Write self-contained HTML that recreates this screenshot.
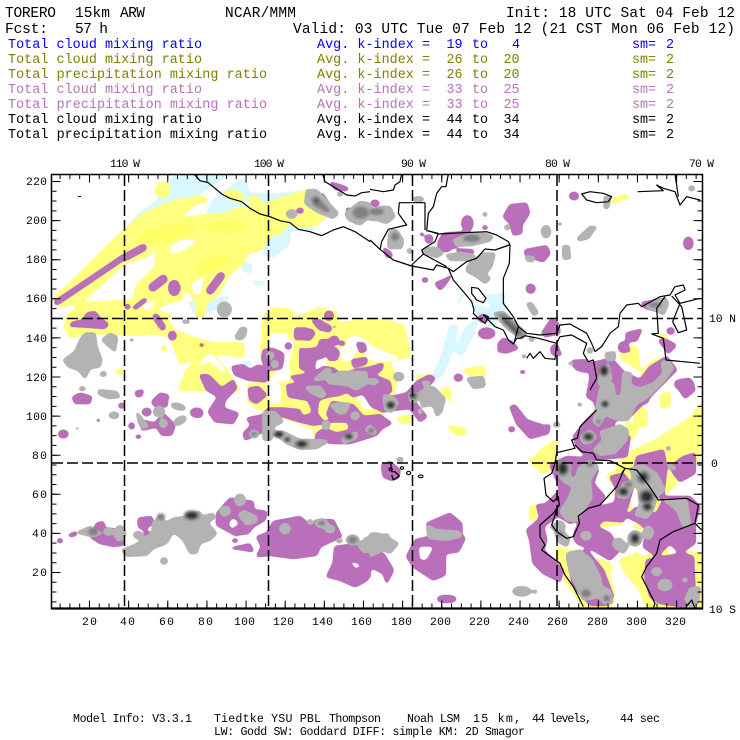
<!DOCTYPE html>
<html><head><meta charset="utf-8"><title>TORERO</title>
<style>
html,body{margin:0;padding:0;background:#fff;width:740px;height:740px;overflow:hidden}
svg{display:block}
.A{transform:translate(40px,170px) scale(.33333)}
.B{transform:translate(370px,170px) scale(.33333)}
.C{transform:translate(40px,390px) scale(.33333)}
.D{transform:translate(370px,390px) scale(.33333)}
.E{transform:translate(540px,340px) scale(.33333)}
.F{transform:translate(200px,325px) scale(.33333)}
.G{transform:translate(255px,300px) scale(.33333)}
text{font-family:"Liberation Mono",monospace;white-space:pre}
.h{font-size:14.5px}.l{font-size:13.4px}.s{font-size:11.4px}.f{font-size:11.6px;font-family:"Liberation Sans",sans-serif}
.bl{fill:#0000ff}.ol{fill:#808000}.pu{fill:#b873b8}.bk{fill:#000}
</style></head><body>
<svg width="740" height="740" viewBox="0 0 740 740" xmlns="http://www.w3.org/2000/svg">
<defs><clipPath id="c"><rect x="52" y="175" width="650" height="434"/></clipPath>
<filter id="sm" filterUnits="userSpaceOnUse" x="30" y="155" width="700" height="475" color-interpolation-filters="sRGB"><feGaussianBlur stdDeviation="1.8"/><feComponentTransfer><feFuncA type="linear" slope="7" intercept="-2.6"/></feComponentTransfer></filter>
<filter id="bl" filterUnits="userSpaceOnUse" x="30" y="155" width="700" height="475" color-interpolation-filters="sRGB"><feGaussianBlur stdDeviation="1.4"/></filter>
</defs>
<rect width="740" height="740" fill="#fff"/>
<g clip-path="url(#c)">
<!-- cyan -->
<g filter="url(#sm)"><g fill="#d9f7ff" stroke="#d9f7ff" stroke-width="5" stroke-linejoin="round" stroke-linecap="round">
<g class="A">
<path d="M350 95L300 130L255 180L300 170L400 100L480 70L560 15L470 15L400 20L385 50L355 85Z"/>
<path d="M590 40L615 25L625 70L700 75L780 65L800 170L830 180L750 180L745 225L700 260L670 250L690 190L600 130L500 130L520 90Z"/>
<path d="M600 275L635 285L630 310L610 300Z"/><path d="M450 395L500 390L570 380L520 420L480 430L460 425Z"/><path d="M640 335L675 335L670 342L645 342Z"/>
</g>
<g class="B">
<path d="M262 400L282 372" stroke-width="8"/><path d="M350 378L405 370L400 420L370 420Z"/><path d="M312 405L400 430L370 470L340 440L325 450Z"/>
<path d="M180 640L215 560L240 470L262 465L250 530L220 610Z"/><path d="M255 540L290 470L325 450L310 490L275 560Z"/><path d="M305 600L330 600L335 625L300 625Z"/>
</g>
<g class="D"><path d="M970 170L985 170L990 215L975 225Z"/><path d="M890 510L910 505L915 530L895 530Z"/></g>
<g class="F"><path d="M125 115L150 110L150 125L130 128Z"/></g>
</g></g>
<!-- yellow -->
<g filter="url(#sm)"><g fill="#ffff80" stroke="#ffff80" stroke-width="6" stroke-linejoin="round" stroke-linecap="round">
<g class="A">
<path d="M40 385L80 350L130 300L200 230L255 180L300 140L360 110L400 95L490 78L500 95L440 140L560 130L610 110L640 130L700 135L750 155L720 190L680 200L670 235L620 250L610 280L570 310L530 375L500 400L490 440L470 440L470 395L450 370L450 340L420 390L380 400L340 420L400 440L300 445L250 430L130 395L60 410Z"/>
<path d="M80 440L120 405L180 395L250 395L320 410L380 440L400 480L450 500L520 520L610 520L610 560L540 550L500 550L460 570L420 580L390 500L340 490L280 495L230 490L170 490L90 500L75 470Z"/>
<ellipse cx="368" cy="60" rx="20" ry="22"/><path d="M550 70L580 60L610 75L605 95L570 85Z"/>
<path d="M625 85L650 80L670 105L770 70L805 60L800 90L860 135L830 165L780 170L740 155L640 130Z"/>
<ellipse cx="238" cy="605" rx="12" ry="6"/><ellipse cx="372" cy="535" rx="7" ry="7"/>
<path d="M420 650L440 600L510 545L560 600L600 660L420 660Z"/>
</g>
<g class="B">
<path d="M725 90L770 72L770 85L730 100Z"/>
<path d="M280 600L340 590L345 620L300 615Z"/>
<path d="M865 495L890 495L890 520L880 510Z"/><path d="M760 530L800 530L810 600L760 570L750 560Z"/><path d="M820 600L880 560L890 640L820 640Z"/>
</g>
<g class="D">
<path d="M480 215L520 175L560 150L560 225L520 250Z"/><path d="M480 350L510 345L500 395L480 385Z"/><path d="M235 110L285 115L285 135L260 135Z"/><path d="M82 85L130 85L125 95L90 95Z"/>
<path d="M870 45L880 10L900 20L895 45L880 55Z"/><path d="M810 110L815 60L830 60L830 100Z"/><path d="M770 90L800 130L770 160Z"/>
<path d="M755 200L860 150L960 85L997 40L997 110L985 210L890 310L870 310L900 400L820 420L760 400L680 410L680 380L720 340L740 290L710 260L740 240Z"/>
<path d="M560 470L590 480L720 520L740 590L725 650L640 650L580 560Z"/><path d="M750 510L830 480L900 480L990 490L997 655L830 655L810 600L760 540Z"/>
</g>
<g class="E"><path d="M268 20L285 45L270 50Z"/><path d="M330 70L370 50L375 85L340 130L300 200L320 240L290 270L280 230L290 170L250 170L290 130Z"/><path d="M360 170L385 155L390 195L370 205Z"/><path d="M300 220L320 225L320 255L290 260Z"/></g>
<g class="F">
<path d="M185 0L610 0L625 70L600 95L560 95L590 160L580 220L545 270L560 300L520 330L440 340L350 345L340 310L290 290L190 260L145 230L145 180L195 170L205 100L190 50Z"/>
<path d="M600 275L630 272L628 292L600 292Z"/><path d="M650 155L690 150L680 185L660 190Z"/><path d="M720 190L750 190L750 230Z"/>
</g>
<g class="G"><path d="M30 45L50 25L110 30L110 55L160 40L190 25L240 35L250 70L290 65L350 60L400 60L440 80L435 145L465 150L460 170L440 175L400 180L20 180L20 125L35 95L25 70Z"/></g>
</g></g>
<!-- darker yellow core -->
<g fill="#ffff55" opacity=".6" filter="url(#bl)"><g class="A"><ellipse cx="380" cy="190" rx="90" ry="25" transform="rotate(-10 380 190)"/><ellipse cx="520" cy="280" rx="60" ry="22" transform="rotate(-20 520 280)"/><ellipse cx="560" cy="170" rx="60" ry="20"/><ellipse cx="480" cy="525" rx="25" ry="10"/></g></g>
<!-- white holes -->
<g filter="url(#sm)"><g fill="#fff" stroke="#fff" stroke-width="3" stroke-linejoin="round">
<g class="A">
<path d="M385 245L410 215L470 210L440 235L400 250Z"/><path d="M430 140L470 105L510 100L490 130Z"/>
<path d="M135 395L190 345L255 285L330 262L345 235L340 290L285 345L275 385L200 390Z"/><path d="M305 415L330 395L345 395L330 420Z"/><path d="M455 345L490 320L480 370L465 375Z"/>
<path d="M470 590L510 550L540 580L560 610L530 590L510 570Z"/>
</g>
<g class="F"><path d="M210 45L280 45L270 100L260 130L210 130Z"/><path d="M420 70L470 50L460 100L430 110Z"/><path d="M500 60L600 100L540 110L500 100Z"/><path d="M240 130L270 130L265 170L210 165Z"/><path d="M470 200L510 210L520 250L490 250Z"/><path d="M350 90L380 90L375 125L350 135Z"/><path d="M205 170L240 180L240 235L210 230Z"/></g>
<g class="G"><path d="M45 105L100 100L85 130L48 132Z"/><path d="M275 118L300 108L340 125L340 150L290 150Z"/></g>
<g class="D">
<path d="M650 385L680 350L700 345L690 375Z"/><path d="M600 455L660 470L720 500L680 500L620 475Z"/><path d="M760 380L800 390L790 410L755 405Z"/><path d="M810 460L850 470L830 495L805 490Z"/>
<path d="M780 300L800 300L810 350L790 360Z"/><path d="M715 330L730 310L750 345L720 345Z"/><path d="M850 240L875 250L880 280L860 270Z"/><path d="M720 540L760 560L800 610L740 620Z"/><path d="M900 480L930 480L920 510L890 520Z"/>
</g>
</g></g>
<!-- purple -->
<g filter="url(#sm)"><g fill="#b96fb9" stroke="#b96fb9" stroke-width="5" stroke-linejoin="round" stroke-linecap="round">
<g class="A">
<path d="M50 397L150 330L250 262" fill="none" stroke-width="18"/><path d="M255 262L310 233" fill="none" stroke-width="22"/>
<path d="M338 352L370 327" fill="none" stroke-width="26"/><ellipse cx="403" cy="354" rx="16" ry="22"/><path d="M510 362L543 318" fill="none" stroke-width="24"/><path d="M285 413L315 390" fill="none" stroke-width="14"/><ellipse cx="262" cy="410" rx="7" ry="7"/>
<path d="M95 458L130 450L140 430L165 425L180 445L205 462L195 475L130 470L90 468Z"/><path d="M347 440L368 472" fill="none" stroke-width="20"/><ellipse cx="397" cy="497" rx="11" ry="13"/><ellipse cx="485" cy="525" rx="7" ry="4"/>
<path d="M870 37L900 45L925 55L920 62L885 58Z"/><ellipse cx="780" cy="122" rx="10" ry="7"/><path d="M845 75L865 105" fill="none" stroke-width="14"/><ellipse cx="925" cy="120" rx="7" ry="6"/>
</g>
<g class="B">
<ellipse cx="15" cy="100" rx="12" ry="9"/><path d="M400 140L420 105L470 100L478 130L455 165L455 190L430 195L420 160Z"/><ellipse cx="612" cy="78" rx="13" ry="11"/><ellipse cx="292" cy="160" rx="16" ry="22"/><ellipse cx="345" cy="173" rx="8" ry="5"/><ellipse cx="155" cy="193" rx="6" ry="4"/><ellipse cx="177" cy="207" rx="11" ry="12"/>
<path d="M205 215L220 190L300 185L280 215L230 245L205 240Z"/><path d="M260 238L310 240L310 252L265 250Z"/><path d="M40 232L65 250L65 262L50 262Z"/><path d="M465 240L530 228L540 250L520 275L490 265L465 255Z"/><ellipse cx="165" cy="330" rx="9" ry="6"/>
<path d="M195 340L230 325L245 315L225 345L210 360Z"/><ellipse cx="482" cy="356" rx="13" ry="13"/><ellipse cx="340" cy="445" rx="15" ry="11"/><ellipse cx="350" cy="490" rx="24" ry="15"/><path d="M385 520L400 505L425 515L445 535L410 548L385 545Z"/>
<path d="M515 490L545 445L565 460L570 490L525 500Z"/><ellipse cx="955" cy="220" rx="13" ry="18"/><path d="M768 490L815 478L800 512L770 515Z"/><ellipse cx="760" cy="532" rx="14" ry="15"/><ellipse cx="902" cy="483" rx="11" ry="9"/><path d="M875 505L890 510L918 525L900 543L885 535Z"/>
<path d="M605 572L650 570L670 605L635 605Z"/><path d="M545 530L560 530L575 555L555 555Z"/><ellipse cx="458" cy="606" rx="8" ry="4"/><ellipse cx="943" cy="644" rx="28" ry="16"/>
<ellipse cx="265" cy="623" rx="12" ry="10"/>
<path d="M815 398L890 385L880 430L820 412Z"/>
</g>
<g class="C">
<path d="M97 22L120 10L155 20L150 40L105 40Z"/><ellipse cx="245" cy="47" rx="9" ry="7"/><ellipse cx="70" cy="132" rx="14" ry="11"/><ellipse cx="175" cy="91" rx="6" ry="3"/><ellipse cx="275" cy="108" rx="8" ry="9"/><ellipse cx="295" cy="140" rx="9" ry="4"/>
<path d="M285 5L310 0L305 18L290 20Z"/><path d="M335 35L360 10L385 15L380 50L345 50Z"/><ellipse cx="320" cy="66" rx="13" ry="11"/><ellipse cx="470" cy="68" rx="18" ry="13"/>
<path d="M300 90L345 100L370 70L405 105L395 135L365 135L350 110L305 120Z"/>
<path d="M85 435L110 425L110 435L90 440Z"/><ellipse cx="60" cy="452" rx="8" ry="6"/><path d="M150 440L170 400L190 395L195 415L250 420L250 465L220 468L180 460Z"/>
<path d="M295 385L335 380L340 400L310 420L295 410Z"/><path d="M375 400L415 400L390 425Z"/><path d="M315 425L330 425L330 440L310 445Z"/>
<path d="M530 370L570 325L640 335L640 360L680 365L675 390L640 410L625 430L585 435L530 405Z"/><ellipse cx="585" cy="452" rx="9" ry="4"/><path d="M572 475L630 462L640 485L600 478Z"/>
<path d="M650 440L680 430L700 395L780 380L810 405L830 390L880 390L905 440L840 470L830 495L760 505L690 495L650 500L665 470Z"/>
<path d="M885 470L960 460L990 500L990 560L975 575L945 590L900 570L860 560L880 520Z"/>
</g>
<g class="D">
<path d="M665 5L700 0L850 0L830 40L770 40L740 70L730 110L780 140L770 200L660 210L620 170L610 140L640 100L680 60Z"/>
<path d="M540 225L590 200L660 205L685 240L670 280L705 320L680 350L640 385L600 400L560 375L530 340L570 300L560 270Z"/>
<path d="M500 345L560 340L560 380L520 410L530 450L520 480L580 540L570 575L520 550L490 520L480 450L470 420L510 385Z"/>
<path d="M625 385L690 350L730 340L770 370L760 395L700 390L680 410L625 410Z"/><path d="M720 260L760 250L790 290L770 360L735 340L740 300Z"/>
<path d="M800 200L880 180L890 230L880 320L960 320L990 350L975 400L975 460L930 490L900 460L860 500L820 470L830 420L810 400L770 380L800 350L810 370L860 370L880 330L830 290L790 250Z"/>
<path d="M900 230L940 200L975 190L975 250L930 275L910 250Z"/><path d="M830 510L880 500L940 490L970 500L975 620L940 650L870 640L840 620L825 560Z"/>
<path d="M610 440L620 410L680 410L720 430L750 480L720 510L670 480L620 460Z"/><path d="M590 500L650 480L700 540L730 620L710 645L660 645L610 590Z"/>
<path d="M135 450L180 440L170 400L240 370L275 400L275 435L285 445L265 485L225 490L225 555L190 570L130 530L110 500Z"/><ellipse cx="230" cy="627" rx="28" ry="10"/>
<path d="M420 50L435 45L470 90L530 110L535 130L480 145L440 100Z"/><ellipse cx="425" cy="118" rx="9" ry="7"/>
<path d="M0 480L40 490L70 540L50 580L40 550L0 530Z"/>
<path d="M35 225L60 215L90 240L85 265L60 270L40 260Z"/>
</g>
<g class="E"><path d="M150 70L215 55L250 95L300 120L330 80L380 50L410 90L370 130L330 170L290 210L260 240L210 240L190 200L140 170L150 120Z"/><path d="M405 125L450 115L465 150L435 175L415 145Z"/><path d="M240 10L260 5L270 35L245 30Z"/><path d="M355 0L405 20L385 40Z"/><path d="M0 260L30 255L25 280L0 285Z"/><path d="M95 70L130 60L145 90L110 90Z"/><ellipse cx="45" cy="30" rx="12" ry="16"/></g>
<g class="F">
<path d="M285 10L320 10L345 25L330 45L290 40Z"/><path d="M355 0L390 0L385 15L360 15Z"/><path d="M392 40L412 35L415 55L400 60Z"/><path d="M470 55L495 55L495 80L478 75Z"/><ellipse cx="265" cy="63" rx="8" ry="8"/><path d="M300 75L345 70L345 110L340 145L300 130Z"/>
<path d="M385 85L410 70L418 85L410 105L385 105Z"/><path d="M455 105L500 98L500 115L460 125Z"/>
<path d="M270 155L340 145L370 125L400 130L420 145L500 130L550 115L545 135L520 150L570 170L575 200L545 205L590 225L580 255L550 260L515 245L490 205L460 215L440 200L420 210L385 215L355 225L350 265L370 290L400 285L380 270L395 230L460 240L490 275L540 270L575 295L545 310L530 330L450 355L400 355L345 345L350 325L375 310L410 325L450 315L445 290L400 290L340 300L300 290L250 275L190 265L205 250L250 250L300 255L305 275L340 265L325 225L265 215L260 180L300 175Z"/>
<path d="M95 125L130 120L150 135L175 120L205 140L200 170L145 165L105 150Z"/><path d="M145 190L175 185L200 210L170 235L150 225Z"/><path d="M190 75L230 75L250 100L245 130L215 135L190 115Z"/>
<path d="M0 150L25 150L65 190L100 165L110 190L75 225L70 250L115 265L100 295L45 290L25 260L55 215L20 195Z"/><ellipse cx="0" cy="265" rx="6" ry="12"/>
<path d="M140 280L190 270L190 320L135 345L130 325L155 300Z"/>
<path d="M575 215L620 205L650 170L690 150L705 160L660 215L640 225L660 250L680 275L660 290L630 250L580 255Z"/>
</g>
<g class="G"><ellipse cx="222" cy="47" rx="13" ry="13"/><path d="M170 60L195 60L230 90L220 95L190 85Z"/><ellipse cx="240" cy="80" rx="4" ry="3"/><path d="M120 85L150 90L175 90L160 110L155 118L120 118Z"/><ellipse cx="100" cy="138" rx="9" ry="9"/><path d="M135 145L170 155L190 140L195 120L225 120L230 150L200 175L140 180Z"/><path d="M230 110L245 110L250 130L235 125Z"/><ellipse cx="262" cy="130" rx="7" ry="6"/><ellipse cx="240" cy="155" rx="8" ry="8"/><path d="M305 128L325 130L335 150L315 158Z"/><path d="M25 150L50 145L85 160L85 180L20 180Z"/></g>
</g></g>
<g filter="url(#sm)"><g fill="#fff" stroke="#fff" stroke-width="2"><g class="D"><path d="M148 472L188 472L168 508L152 508Z"/></g><g class="C"><path d="M930 515L960 525L950 535Z"/><path d="M580 385L595 400L575 415L568 400Z"/></g></g></g>
<!-- gray -->
<g filter="url(#sm)"><g fill="#b3b3b3" stroke="#b3b3b3" stroke-width="5" stroke-linejoin="round" stroke-linecap="round">
<g class="A">
<path d="M800 60L830 60L895 130L880 145L830 125L795 100Z"/><ellipse cx="755" cy="132" rx="15" ry="12"/><path d="M915 130L960 95L990 100L990 140L960 165L925 150Z"/><ellipse cx="900" cy="72" rx="8" ry="6"/>
<ellipse cx="553" cy="418" rx="20" ry="21"/><path d="M70 570L105 545L120 510L135 490L165 490L170 530L185 570L180 590L150 595L135 625L115 600L85 590Z"/><path d="M185 510L210 490L232 500L225 545Z"/><ellipse cx="190" cy="612" rx="9" ry="7"/>
<path d="M585 500L605 472L620 480L610 505L595 510Z"/><ellipse cx="438" cy="455" rx="12" ry="4"/><ellipse cx="275" cy="510" rx="6" ry="4"/><ellipse cx="127" cy="656" rx="10" ry="5"/>
</g>
<g class="B">
<path d="M0 120L30 110L60 110L75 140L50 160L20 150L0 150Z"/><path d="M60 180L80 180L100 210L95 235L55 235L55 210Z"/><ellipse cx="120" cy="243" rx="9" ry="6"/><ellipse cx="145" cy="88" rx="16" ry="7"/><ellipse cx="345" cy="133" rx="6" ry="6"/><ellipse cx="412" cy="172" rx="8" ry="7"/><ellipse cx="528" cy="185" rx="13" ry="18"/>
<path d="M622 205L660 170L680 170L655 205L625 212Z"/><path d="M250 210L300 190L345 190L370 200L360 212L310 225L260 228Z"/><path d="M228 255L270 248L315 255L300 270L240 270Z"/><path d="M160 235L200 232L220 250L200 262L160 250Z"/>
<path d="M290 290L340 250L375 250L365 290L345 315L362 325L345 340L320 320L290 305Z"/><path d="M470 400L485 398L505 430L490 436Z"/><path d="M578 228L598 228L598 245L602 265L580 268Z"/><path d="M465 258L495 262L490 275L470 272Z"/><ellipse cx="570" cy="162" rx="7" ry="3"/>
<path d="M370 430L400 425L470 490L455 508L410 475Z"/><ellipse cx="485" cy="507" rx="8" ry="6"/><ellipse cx="462" cy="559" rx="7" ry="4"/><path d="M703 80L722 80L715 115L703 115Z"/><ellipse cx="965" cy="55" rx="9" ry="7"/><path d="M830 405L870 385L895 395L890 415L880 435L865 425L835 415Z"/><ellipse cx="660" cy="543" rx="8" ry="6"/>
<path d="M290 625L340 620L345 650L310 655Z"/><ellipse cx="602" cy="581" rx="6" ry="4"/>
</g>
<g class="C">
<path d="M175 0L230 5L240 22L205 25L175 12Z"/><ellipse cx="222" cy="76" rx="14" ry="9"/><ellipse cx="112" cy="115" rx="5" ry="3"/><path d="M290 65L325 110L305 115L295 95Z"/><ellipse cx="357" cy="65" rx="16" ry="15"/><ellipse cx="370" cy="100" rx="11" ry="12"/><ellipse cx="415" cy="50" rx="22" ry="8" transform="rotate(15 415 50)"/><ellipse cx="420" cy="92" rx="20" ry="10" transform="rotate(-30 420 92)"/>
<path d="M110 428L150 410L185 430L160 440Z"/><ellipse cx="205" cy="424" rx="12" ry="11"/><ellipse cx="240" cy="430" rx="16" ry="22"/><ellipse cx="295" cy="435" rx="14" ry="10"/>
<path d="M245 480L290 462L335 430L340 395L365 375L375 400L400 385L440 385L500 395L530 430L510 450L480 460L470 490L450 490L430 450L400 425L380 460L340 475L320 495L260 498Z"/><ellipse cx="372" cy="513" rx="10" ry="9"/>
<path d="M400 385L440 380L450 370L480 365L485 380L520 370L525 385L490 400Z"/><ellipse cx="555" cy="363" rx="15" ry="14"/><ellipse cx="600" cy="330" rx="15" ry="17"/><path d="M595 375L610 362L650 380L650 395L620 405Z"/>
<ellipse cx="735" cy="416" rx="15" ry="14"/><ellipse cx="845" cy="400" rx="17" ry="13"/><ellipse cx="870" cy="417" rx="14" ry="11"/><ellipse cx="938" cy="450" rx="18" ry="14"/><path d="M980 440L990 470L975 490L955 470Z"/><ellipse cx="898" cy="452" rx="9" ry="6"/><ellipse cx="810" cy="396" rx="8" ry="7"/>
</g>
<g class="D">
<path d="M0 430L25 430L50 440L85 460L60 490L40 480L20 490L0 500Z"/><path d="M170 405L200 420L270 425L275 440L230 450L175 445Z"/><ellipse cx="455" cy="604" rx="26" ry="13"/><ellipse cx="495" cy="605" rx="7" ry="4"/><ellipse cx="648" cy="437" rx="15" ry="12"/><path d="M730 450L750 445L775 470L760 490L730 470Z"/>
<ellipse cx="835" cy="428" rx="14" ry="19"/><ellipse cx="795" cy="445" rx="20" ry="22"/><ellipse cx="860" cy="545" rx="14" ry="11"/><ellipse cx="885" cy="585" rx="20" ry="16"/><path d="M945 630L960 595L990 590L985 640L960 650Z"/><ellipse cx="945" cy="570" rx="7" ry="6"/>
<path d="M780 235L820 225L860 250L885 300L860 320L850 360L830 385L795 375L810 340L805 300L790 270Z"/><path d="M740 320L760 280L790 270L790 290L770 325Z"/><path d="M880 330L950 330L960 400L940 410L920 360Z"/>
<path d="M565 215L600 220L600 270L620 260L625 235L660 210L685 230L660 270L665 325L640 360L620 395L590 390L570 365L595 325L610 290L580 275L560 245Z"/>
<path d="M540 410L570 392L585 405L580 425L560 425Z"/><path d="M555 430L580 425L600 445L590 470L565 455Z"/><path d="M590 490L630 480L665 510L690 560L695 590L720 600L728 640L700 640L690 620L670 625L640 630L620 590L600 550Z"/>
<ellipse cx="560" cy="103" rx="10" ry="6"/><ellipse cx="628" cy="42" rx="5" ry="3"/><ellipse cx="895" cy="175" rx="6" ry="6"/><path d="M890 215L920 235L900 240Z"/><ellipse cx="90" cy="210" rx="9" ry="5"/><ellipse cx="50" cy="437" rx="6" ry="6"/>
</g>
<g class="E">
<path d="M195 40L225 35L225 60L200 60Z"/><path d="M180 100L205 70L215 120L175 135Z"/><path d="M180 145L220 130L225 170L205 210L175 260L160 245L170 200Z"/>
<path d="M250 95L275 100L270 135L300 145L340 130L370 100L365 65L385 60L400 85L370 125L320 175L290 190L265 240L235 240L205 230L215 180L245 165Z"/>
<path d="M180 275L240 255L265 270L260 300L225 340L180 345L160 330L190 300Z"/><path d="M120 290L150 270L170 290L150 310L130 310Z"/><ellipse cx="150" cy="30" rx="8" ry="6"/><ellipse cx="93" cy="70" rx="7" ry="4"/><ellipse cx="50" cy="255" rx="9" ry="6"/><ellipse cx="120" cy="195" rx="6" ry="3"/>
</g>
<g class="F">
<path d="M120 10L140 8L135 35L110 40Z"/><path d="M210 80L225 90L205 105L200 85Z"/><ellipse cx="225" cy="118" rx="10" ry="10"/>
<path d="M340 165L380 130L395 135L375 160L360 165Z"/><path d="M380 160L420 140L500 140L500 175L470 195L440 180L385 175Z"/><ellipse cx="520" cy="170" rx="15" ry="8"/><ellipse cx="596" cy="155" rx="15" ry="12"/><path d="M315 185L360 185L378 210L365 218L335 205Z"/>
<path d="M390 240L415 235L450 235L435 265L415 265Z"/><ellipse cx="465" cy="272" rx="12" ry="11"/><ellipse cx="378" cy="300" rx="11" ry="13"/><path d="M510 300L530 320L520 330L495 315Z"/>
<path d="M550 210L580 215L595 235L575 262L555 255Z"/><path d="M625 205L655 205L650 230L630 230Z"/>
<path d="M660 200L700 185L735 220L725 260L710 275L700 240L665 245Z"/><ellipse cx="660" cy="260" rx="6" ry="7"/><path d="M665 170L690 170L680 190Z"/>
<path d="M190 260L225 260L250 290L220 305L215 345L190 345Z"/><ellipse cx="162" cy="327" rx="13" ry="11"/>
<path d="M215 320L250 320L300 345L365 345L385 350L350 370L300 372L260 355Z"/><path d="M425 340L470 320L470 340L430 355Z"/><ellipse cx="600" cy="402" rx="10" ry="3"/>
</g>
</g></g>
<!-- medium & dark -->
<g filter="url(#bl)"><g fill="#808080">
<g class="A"><path d="M812 85L830 78L870 120L860 128L820 105Z"/><ellipse cx="962" cy="128" rx="24" ry="18"/></g>
<g class="B"><ellipse cx="20" cy="125" rx="22" ry="10"/><ellipse cx="305" cy="205" rx="26" ry="11"/><path d="M380 430L405 432L465 492L450 502Z"/><ellipse cx="75" cy="200" rx="12" ry="12"/><ellipse cx="855" cy="405" rx="20" ry="7"/></g>
<g class="C"><ellipse cx="160" cy="425" rx="15" ry="11"/><ellipse cx="363" cy="380" rx="12" ry="10"/><ellipse cx="455" cy="376" rx="24" ry="15"/><ellipse cx="938" cy="450" rx="13" ry="10"/><ellipse cx="845" cy="400" rx="10" ry="7"/></g>
<g class="D"><ellipse cx="578" cy="235" rx="20" ry="24"/><ellipse cx="660" cy="222" rx="10" ry="9"/><ellipse cx="820" cy="262" rx="20" ry="20"/><ellipse cx="830" cy="320" rx="24" ry="22"/><ellipse cx="832" cy="350" rx="16" ry="14"/><ellipse cx="760" cy="305" rx="18" ry="15"/><ellipse cx="775" cy="283" rx="12" ry="9"/><ellipse cx="795" cy="445" rx="16" ry="18"/><ellipse cx="655" cy="140" rx="18" ry="14"/><ellipse cx="685" cy="95" rx="6" ry="7"/><ellipse cx="705" cy="42" rx="13" ry="11"/><ellipse cx="648" cy="610" rx="14" ry="12"/><ellipse cx="570" cy="432" rx="8" ry="7"/><ellipse cx="710" cy="625" rx="10" ry="10"/></g>
<g class="E"><ellipse cx="192" cy="92" rx="15" ry="18"/></g>
<g class="F"><ellipse cx="235" cy="328" rx="16" ry="10"/><ellipse cx="262" cy="343" rx="10" ry="7"/><ellipse cx="305" cy="357" rx="22" ry="12"/><ellipse cx="445" cy="335" rx="15" ry="10"/><ellipse cx="513" cy="317" rx="10" ry="8"/><ellipse cx="572" cy="240" rx="15" ry="12"/><ellipse cx="640" cy="212" rx="13" ry="12"/><ellipse cx="162" cy="327" rx="8" ry="6"/></g>
</g></g>
<g filter="url(#bl)"><g fill="#2e2e2e">
<g class="A"><ellipse cx="830" cy="92" rx="7" ry="7" fill="#555"/></g>
<g class="B"><path d="M405 445L450 490L442 495L395 450Z" fill="#555"/></g>
<g class="C"><ellipse cx="455" cy="376" rx="16" ry="9"/></g>
<g class="D"><ellipse cx="578" cy="235" rx="11" ry="15"/><ellipse cx="820" cy="262" rx="10" ry="11"/><ellipse cx="830" cy="320" rx="15" ry="14"/><ellipse cx="832" cy="350" rx="9" ry="8"/><ellipse cx="760" cy="305" rx="10" ry="8"/><ellipse cx="795" cy="445" rx="9" ry="11"/><ellipse cx="655" cy="140" rx="10" ry="7"/><ellipse cx="705" cy="42" rx="7" ry="6"/></g>
<g class="E"><ellipse cx="192" cy="92" rx="9" ry="12"/></g>
<g class="F"><ellipse cx="237" cy="328" rx="11" ry="7"/><ellipse cx="262" cy="344" rx="6" ry="4"/><ellipse cx="305" cy="357" rx="13" ry="7"/><ellipse cx="447" cy="334" rx="8" ry="5"/><ellipse cx="572" cy="240" rx="9" ry="8"/><ellipse cx="638" cy="212" rx="6" ry="6"/></g>
</g></g>
<!-- coast -->
<g fill="none" stroke="#000" stroke-width="3.6" stroke-linejoin="round">
<g class="A">
<path d="M462 12L480 32L505 38L525 55L545 72L570 85L605 95L630 115L660 132L690 140L720 152L750 158L775 178L810 185L845 197L880 180L910 170L945 185L990 215"/>
<path d="M848 12L855 35L880 50L920 75L945 78L965 68L990 65"/>
</g>
<g class="B">
<path d="M0 210L30 238L70 270L125 288L190 300L200 285L235 295L250 330L280 365L305 395L312 420L310 430L325 445L345 460L355 440L340 435L375 470L400 480L415 510L430 522L440 505"/>
<path d="M0 58L40 65L70 60L75 45L90 35L95 12"/>
<path d="M235 12L228 50L215 50L200 70L190 110L175 130L170 182L205 190"/>
<path d="M165 98L88 98L85 130L110 165L55 178L35 215L30 240"/><path d="M165 98L165 180"/>
<path d="M175 182L205 192L280 188L350 185L380 195L415 215L420 225L418 280L400 325L400 400L430 440L445 470L470 490L510 495L560 490L570 465L600 462L650 490L665 520L675 545"/>
<path d="M418 225L375 240L345 237L320 265L290 275L250 305L235 295"/><path d="M205 190L195 215L155 240L160 252L230 290"/><path d="M160 252L125 285"/>
<path d="M305 352L325 355L348 385L340 398L320 390L305 370Z"/>
<path d="M440 505L450 505L465 497L505 505L560 520L570 500L605 495L650 520L640 550L655 575L670 570L680 625L660 660"/><path d="M445 470L432 520"/>
<path d="M470 565L480 550L490 565L510 545L525 565L555 568L560 520"/>
<path d="M675 545L695 530L720 490L745 470L750 430L770 405L805 400L815 410L870 380L900 375L915 350L940 345L945 360L915 375L930 400L990 385"/>
<path d="M885 380L860 415L865 490L845 492L880 505L888 570L990 580"/>
<path d="M905 378L935 410L950 480L925 488L908 455L930 400"/>
<path d="M635 72L660 65L700 70L725 80L715 95L680 98L650 90Z"/><path d="M803 65L880 62L860 45L880 55L915 65L930 105L950 80L990 90"/><path d="M915 12L925 80"/>
</g>
<g class="D">
<path d="M680 60L630 110L622 145L605 150L615 175L560 188L555 220L545 250L522 265L528 315L550 335L565 320L568 345L550 370L510 405L510 440L525 465L515 480L570 520L585 555L610 590L640 650"/>
<path d="M615 165L635 185L670 190L680 210L720 212L765 235L755 250"/>
<path d="M565 345L545 405L560 425L590 445L610 440L628 400L625 378L655 355L690 345L740 290L755 255L765 235"/>
<path d="M765 235L800 240L835 285L865 330L950 325L985 345L975 400L995 420"/><path d="M975 400L910 425L870 450L860 490L830 530L815 560L835 600L855 640L850 655"/><path d="M945 655L965 630L975 655"/>
<path d="M62 215L65 245L75 245L88 258L70 270L65 255"/><ellipse cx="96" cy="234" rx="5" ry="4"/><ellipse cx="116" cy="249" rx="6" ry="5"/><ellipse cx="152" cy="259" rx="7" ry="4"/><ellipse cx="62" cy="238" rx="5" ry="4"/>
</g>
</g>
</g>
<!-- grid -->
<g stroke="#000" fill="none">
<g stroke-width="1.5" stroke-dasharray="11 4">
<path d="M124.5 175V609M268.5 175V609M412.5 175V609M557 175V609"/>
<path d="M52 318.5H702M52 463H702"/>
</g>
<path d="M51.5 609V174.5H702.5V609" stroke-width="1.5"/>
<path d="M51 608.5H703" stroke-width="2.2"/>
<path d="M59.6 176.5H702" stroke-width="5" stroke-dasharray="1 8.785"/>
<path d="M59.6 606H702" stroke-width="5" stroke-dasharray="1 8.785"/>
<path d="M89 178.5H702" stroke-width="8" stroke-dasharray="1 38.14"/>
<path d="M89 604.5H702" stroke-width="8" stroke-dasharray="1 38.14"/>
<path d="M54 181V609" stroke-width="5" stroke-dasharray="1 8.775"/>
<path d="M700 181V609" stroke-width="5" stroke-dasharray="1 8.775"/>
<path d="M56 181V609" stroke-width="9" stroke-dasharray="1 38.1"/>
<path d="M698 181V609" stroke-width="9" stroke-dasharray="1 38.1"/>
</g>
<rect x="78" y="196" width="3" height="1" fill="#000"/>
<!-- header text -->
<g class="bk" fill="#000">
<text class="h" x="5" y="17" textLength="51">TORERO</text>
<text class="h" x="75" y="17" textLength="35">15km</text>
<text class="h" x="120" y="17" textLength="25">ARW</text>
<text class="h" x="225" y="17" textLength="71">NCAR/MMM</text>
<text class="h" x="506" y="17" textLength="229">Init: 18 UTC Sat 04 Feb 12</text>
<text class="h" x="5" y="33" textLength="43">Fcst:</text>
<text class="h" x="75" y="33" textLength="33">57 h</text>
<text class="h" x="293" y="33" textLength="442">Valid: 03 UTC Tue 07 Feb 12 (21 CST Mon 06 Feb 12)</text>
</g>
<!-- legend -->
<g class="l">
<text class="bl" x="8" y="48" textLength="194">Total cloud mixing ratio</text>
<text class="bl" x="317" y="48" textLength="113">Avg. k-index =</text><text class="bl" x="446.5" y="48" textLength="16">19</text><text class="bl" x="472" y="48" textLength="16">to</text><text class="bl" x="512" y="48">4</text><text class="bl" x="632" y="48" textLength="24">sm=</text><text class="bl" x="666" y="48">2</text>
<text class="ol" x="8" y="63" textLength="194">Total cloud mixing ratio</text>
<text class="ol" x="317" y="63" textLength="113">Avg. k-index =</text><text class="ol" x="446.5" y="63" textLength="16">26</text><text class="ol" x="472" y="63" textLength="16">to</text><text class="ol" x="503.5" y="63" textLength="16">20</text><text class="ol" x="632" y="63" textLength="24">sm=</text><text class="ol" x="666" y="63">2</text>
<text class="ol" x="8" y="78" textLength="259">Total precipitation mixing ratio</text>
<text class="ol" x="317" y="78" textLength="113">Avg. k-index =</text><text class="ol" x="446.5" y="78" textLength="16">26</text><text class="ol" x="472" y="78" textLength="16">to</text><text class="ol" x="503.5" y="78" textLength="16">20</text><text class="ol" x="632" y="78" textLength="24">sm=</text><text class="ol" x="666" y="78">2</text>
<text class="pu" x="8" y="93" textLength="194">Total cloud mixing ratio</text>
<text class="pu" x="317" y="93" textLength="113">Avg. k-index =</text><text class="pu" x="446.5" y="93" textLength="16">33</text><text class="pu" x="472" y="93" textLength="16">to</text><text class="pu" x="503.5" y="93" textLength="16">25</text><text class="pu" x="632" y="93" textLength="24">sm=</text><text class="pu" x="666" y="93">2</text>
<text class="pu" x="8" y="108" textLength="259">Total precipitation mixing ratio</text>
<text class="pu" x="317" y="108" textLength="113">Avg. k-index =</text><text class="pu" x="446.5" y="108" textLength="16">33</text><text class="pu" x="472" y="108" textLength="16">to</text><text class="pu" x="503.5" y="108" textLength="16">25</text><text class="pu" x="632" y="108" textLength="24">sm=</text><text class="pu" x="666" y="108">2</text>
<text class="bk" x="8" y="123" textLength="194">Total cloud mixing ratio</text>
<text class="bk" x="317" y="123" textLength="113">Avg. k-index =</text><text class="bk" x="446.5" y="123" textLength="16">44</text><text class="bk" x="472" y="123" textLength="16">to</text><text class="bk" x="503.5" y="123" textLength="16">34</text><text class="bk" x="632" y="123" textLength="24">sm=</text><text class="bk" x="666" y="123">2</text>
<text class="bk" x="8" y="138" textLength="259">Total precipitation mixing ratio</text>
<text class="bk" x="317" y="138" textLength="113">Avg. k-index =</text><text class="bk" x="446.5" y="138" textLength="16">44</text><text class="bk" x="472" y="138" textLength="16">to</text><text class="bk" x="503.5" y="138" textLength="16">34</text><text class="bk" x="632" y="138" textLength="24">sm=</text><text class="bk" x="666" y="138">2</text>
</g>
<!-- axis labels -->
<g class="s" fill="#000">
<text x="110" y="167" textLength="30">110 W</text><text x="254" y="167" textLength="30">100 W</text><text x="401" y="167" textLength="25">90 W</text><text x="545" y="167" textLength="25">80 W</text><text x="689" y="167" textLength="25">70 W</text>
<text x="26" y="185" textLength="21">220</text><text x="26" y="224" textLength="21">200</text><text x="26" y="263" textLength="21">180</text><text x="26" y="302" textLength="21">160</text><text x="26" y="342" textLength="21">140</text><text x="26" y="381" textLength="21">120</text><text x="26" y="420" textLength="21">100</text><text x="32" y="459" textLength="15">80</text><text x="32" y="498" textLength="15">60</text><text x="32" y="537" textLength="15">40</text><text x="32" y="576" textLength="15">20</text>
<text x="709" y="322" textLength="27">10 N</text><text x="711" y="467">0</text><text x="709" y="613" textLength="27">10 S</text>
<text x="82" y="625" textLength="15">20</text><text x="120" y="625" textLength="15">40</text><text x="159" y="625" textLength="15">60</text><text x="198" y="625" textLength="15">80</text><text x="234" y="625" textLength="21">100</text><text x="273" y="625" textLength="21">120</text><text x="312" y="625" textLength="21">140</text><text x="351" y="625" textLength="21">160</text><text x="391" y="625" textLength="21">180</text><text x="430" y="625" textLength="21">200</text><text x="469" y="625" textLength="21">220</text><text x="508" y="625" textLength="21">240</text><text x="547" y="625" textLength="21">260</text><text x="587" y="625" textLength="21">280</text><text x="626" y="625" textLength="21">300</text><text x="665" y="625" textLength="21">320</text>
</g>
<!-- footer -->
<g class="f" fill="#000">
<text x="73" y="722" textLength="119">Model Info: V3.3.1</text>
<text x="214" y="722" textLength="107">Tiedtke YSU PBL</text>
<text x="329" y="722" textLength="52">Thompson</text>
<text x="407" y="722" textLength="53">Noah LSM</text>
<text x="473" y="722" textLength="48">15 km,</text>
<text x="532" y="722" textLength="60">44 levels,</text>
<text x="620" y="722" textLength="40">44 sec</text>
<text x="214" y="735" textLength="311">LW: Godd SW: Goddard DIFF: simple KM: 2D Smagor</text>
</g>
</svg>
</body></html>
